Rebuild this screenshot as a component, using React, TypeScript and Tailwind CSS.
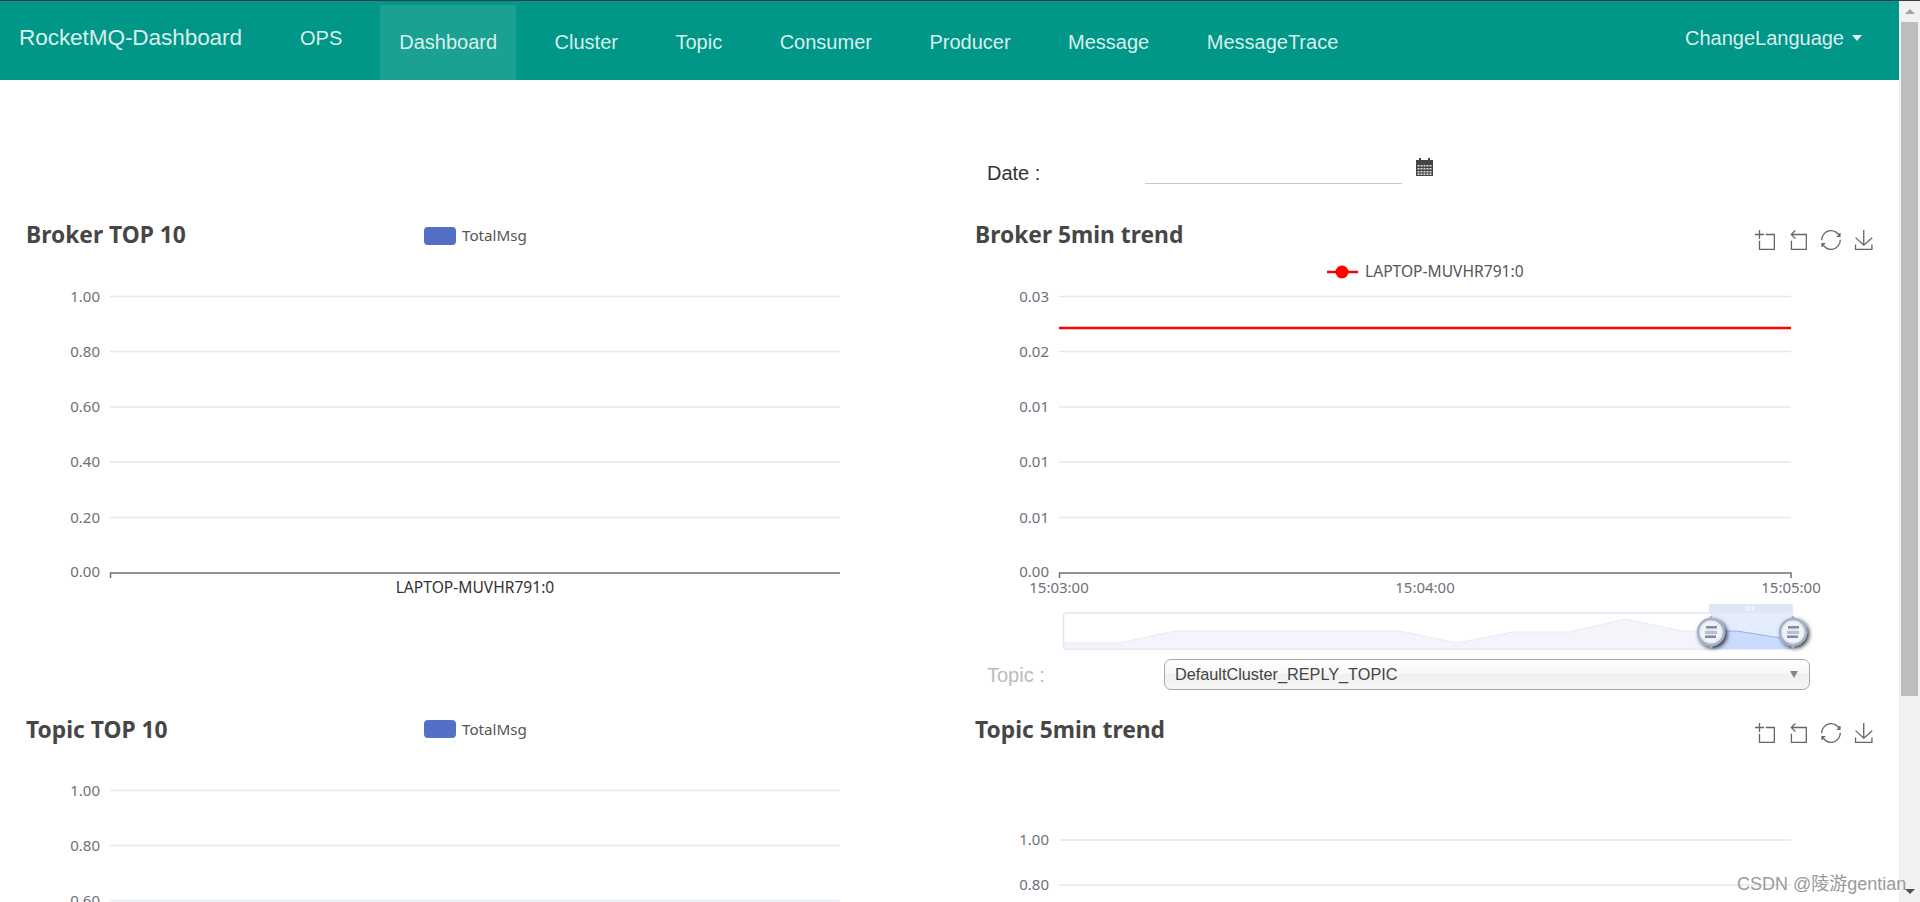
import React from "react";

const NAV_ITEMS = ["Dashboard", "Cluster", "Topic", "Consumer", "Producer", "Message", "MessageTrace"];

const GRID = "#e3e7f4";
const AXIS = "#6e7079";

// svg coordinates are page coordinates minus the top of the chart (257 / 750)
const TOOL_ICONS = [
  "M0,13.5h26.9 M13.5,26.9V0 M32.1,13.5H58V58H13.5V32.1",
  "M22,1.4L9.9,13.5l12.3,12.3 M10.3,13.5H54.9v44.6H10.3v-26",
  "M47,18.9h9.8V8.7 M56.3,20.1C52.1,9,40.5,0.6,26.8,2.1C12.6,3.7,1.6,16.2,2.1,30.6 M13,41.1H3.1v10.2 M3.7,39.9c4.2,11.1,15.8,19.5,29.5,18c14.2-1.6,25.2-14.1,24.7-28.5",
  "M4.7,22.9L29.3,45.5L54.7,23.4 M4.6,43.6L4.6,58L53.8,58L53.8,43.6 M29.2,45.1L29.2,0",
];

const Toolbox = () => (
  <div className="ml-auto mt-2 mr-[25px] flex gap-[13px]">
    {TOOL_ICONS.map((d) => (
      <svg key={d} viewBox="0 0 60 60" className="h-5 w-5 overflow-visible" fill="none" stroke="#666">
        <path d={d} strokeWidth={1.3} vectorEffect="non-scaling-stroke" />
      </svg>
    ))}
  </div>
);

const Heading = ({ children, lower }: { children: React.ReactNode; lower?: boolean }) => (
  <h2
    className={`${lower ? "mt-[2px]" : "-mt-[1px]"} font-['Noto_Sans',sans-serif] text-[22.8px] font-bold leading-none text-[#464646] whitespace-nowrap`}
  >
    {children}
  </h2>
);

const BarHeader = ({ title, lower }: { title: string; lower?: boolean }) => (
  <div className="flex h-[42px] items-center pl-[26px]">
    <div className="w-[398px]">
      <Heading lower={lower}>{title}</Heading>
    </div>
    <span className="h-[18px] w-[32px] rounded-[4px] bg-[#5470c6]" />
    <span className={`ml-[6px] ${lower ? "mt-0" : "-mt-[2px]"} font-['Noto_Sans',sans-serif] text-[15.2px] text-[#555]`}>TotalMsg</span>
  </div>
);

const GridLines = ({ ticks, x1, x2 }: { ticks: { y: number; label: string }[]; x1: number; x2: number }) => (
  <>
    {ticks.map((t) => (
      <g key={t.y}>
        <line x1={x1} x2={x2} y1={t.y} y2={t.y} stroke={GRID} strokeWidth={1.5} />
        <text x={x1 - 10} y={t.y + 5} textAnchor="end" className="fill-[#6e7079] text-[15px]">
          {t.label}
        </text>
      </g>
    ))}
  </>
);

const Handle = ({ x }: { x: number }) => (
  <g transform={`translate(${x} 375)`}>
    <circle r={13} fill="url(#handleFill)" stroke="#a4afc8" strokeWidth={2.5} filter="url(#handleShadow)" />
    <circle cy={-14.5} r={1.5} fill="#a4afc8" />
    <circle cy={14.5} r={1.5} fill="#a4afc8" />
    <rect x={-5} y={-6} width={11} height={2.5} fill="#7f8ba8" />
    <rect x={-6} y={-1} width={12} height={3} fill="#b9bfce" />
    <rect x={-6} y={3.5} width={11} height={2.5} fill="#7f8ba8" />
  </g>
);

const BarChart = ({ ticks, height, withAxis }: { ticks: { y: number; label: string }[]; height: number; withAxis?: boolean }) => (
  <svg width={950} height={height} className="block font-['Noto_Sans',sans-serif]">
    <GridLines ticks={ticks} x1={110} x2={840} />
    {withAxis && (
      <>
        <text x={100} y={320} textAnchor="end" className="fill-[#6e7079] text-[15px]">
          0.00
        </text>
        <path d="M110.5 321V316H840" fill="none" stroke={AXIS} strokeWidth={1.5} />
        <text x={475} y={336} textAnchor="middle" className="fill-[#333] text-[15.6px]">
          LAPTOP-MUVHR791:0
        </text>
      </>
    )}
  </svg>
);

const TrendChart = () => (
  <svg width={949} height={398} className="block font-['Noto_Sans',sans-serif]">
    <defs>
      <radialGradient id="handleFill" cx="50%" cy="50%" r="55%">
        <stop offset="0%" stopColor="#dfe2e8" />
        <stop offset="60%" stopColor="#f4f5f8" />
        <stop offset="100%" stopColor="#d3d8e3" />
      </radialGradient>
      <filter id="handleShadow" x="-60%" y="-60%" width="220%" height="220%">
        <feDropShadow dx={2} dy={2} stdDeviation={2} floodColor="#000" floodOpacity={0.8} />
      </filter>
    </defs>

    {/* legend */}
    <line x1={377} x2={408} y1={15} y2={15} stroke="#ff0000" strokeWidth={2.5} />
    <circle cx={392} cy={15} r={6.5} fill="#ff0000" />
    <text x={415} y={20} className="fill-[#555] text-[15.6px]">
      LAPTOP-MUVHR791:0
    </text>

    <GridLines
      x1={109}
      x2={841}
      ticks={[
        { y: 39.5, label: "0.03" },
        { y: 94.5, label: "0.02" },
        { y: 150, label: "0.01" },
        { y: 205, label: "0.01" },
        { y: 260.5, label: "0.01" },
      ]}
    />
    <text x={99} y={320} textAnchor="end" className="fill-[#6e7079] text-[15px]">
      0.00
    </text>
    <line x1={109} x2={841} y1={71} y2={71} stroke="#ff0000" strokeWidth={2.5} />
    <path d="M109.5 321V316H841V321" fill="none" stroke={AXIS} strokeWidth={1.5} />
    {["15:03:00", "15:04:00", "15:05:00"].map((label, i) => (
      <text key={label} x={109 + i * 366} y={336} textAnchor="middle" className="fill-[#6e7079] text-[15px]">
        {label}
      </text>
    ))}

    {/* data zoom */}
    <rect x={113.5} y={356} width={727} height={36} rx={3} fill="#fff" stroke="#dfe6f6" strokeWidth={1.5} />
    <path
      d="M114 386H169L225 374H450L507 386L563 375H619L675 362L732 374H761V392H114Z"
      fill="#f3f5fb"
      stroke="#e6ebf7"
      strokeWidth={1}
    />
    <rect x={761} y={356} width={82} height={36} fill="#e5edfd" />
    <path d="M761 374H787L843 383V392H761Z" fill="#cadcfd" />
    <path d="M761 374H787L843 383" fill="none" stroke="#8fb0f7" strokeWidth={1} />
    <rect x={759} y={347} width={84} height={9} rx={1} fill="#dfe7f5" />
    <path d="M797 349.5v4M800 349.5v4M803 349.5v4" stroke="#fff" strokeWidth={1.2} />
    <Handle x={761} />
    <Handle x={843} />
  </svg>
);

const App = () => {
  return (
    <div className="flex h-[902px] w-full flex-col overflow-hidden bg-white">
      <div className="h-px bg-[#2f3e46]" />
      <div className="flex min-h-0 flex-1">
        <div className="w-[1899px] shrink-0">
          <nav className="flex h-[79px] bg-[#009688] font-['Liberation_Sans',Arial,sans-serif] text-[#d8efeb]">
            <a className="w-[283px] pl-[19px] pt-[24px] text-[22.6px] leading-[26px] tracking-[-0.1px]">RocketMQ-Dashboard</a>
            <a className="px-[17px] pt-[25px] text-[20px] leading-[24px]">OPS</a>
            <ul className="ml-[21px] flex gap-[19.5px] pt-[4px]">
              {NAV_ITEMS.map((item) => (
                <li
                  key={item}
                  className={`px-[19px] pt-[25px] text-[20px] leading-[24px] ${item === "Dashboard" ? "bg-[#1ba192]" : ""}`}
                >
                  {item}
                </li>
              ))}
            </ul>
            <div className="ml-auto mr-[37px] flex items-center gap-[8px] self-start pt-[25px] text-[20px] leading-[24px]">
              ChangeLanguage
              <span className="h-0 w-0 border-x-[5.5px] border-t-[6px] border-x-transparent border-t-[#d8efeb]" />
            </div>
          </nav>

          <div className="grid grid-cols-[950px_949px]">
            <div className="h-[135px]" />
            <div className="flex h-[135px] items-start font-['Liberation_Sans',Arial,sans-serif]">
              <span className="ml-[37px] mt-[81px] w-[158px] text-[20px] leading-[24px] text-[#333]">Date :</span>
              <span className="mt-[103px] h-px w-[257px] bg-[#c9c9c9]" />
              <svg viewBox="0 0 17 18" className="ml-[14px] mt-[78px] h-[18px] w-[17px]">
                <path d="M3 0h2v2h7V0h2v2h3v16H0V2h3z" fill="#444" />
                {[7, 10, 13, 15.5].map((y) =>
                  [1.5, 4.5, 7.5, 10.5, 13.5].map((x) => (
                    <rect key={`${x}-${y}`} x={x} y={y} width={2} height={1.5} fill="#ddd" />
                  ))
                )}
              </svg>
            </div>

            {/* broker row */}
            <div className="h-[493px]">
              <BarHeader title="Broker TOP 10" />
              <BarChart
                withAxis
                height={451}
                ticks={[
                  { y: 39.5, label: "1.00" },
                  { y: 94.5, label: "0.80" },
                  { y: 150, label: "0.60" },
                  { y: 205, label: "0.40" },
                  { y: 260.5, label: "0.20" },
                ]}
              />
            </div>
            <div className="h-[493px]">
              <div className="flex h-[42px] items-center pl-[25px]">
                <Heading>Broker 5min trend</Heading>
                <Toolbox />
              </div>
              <TrendChart />
              <div className="mt-[4px] flex items-center font-['Liberation_Sans',Arial,sans-serif]">
                <span className="ml-[37px] w-[177px] text-[20px] leading-[24px] text-[#bbbbbb]">Topic :</span>
                <div className="flex h-[31px] w-[646px] items-center justify-between rounded-[7px] border border-[#a9a9a9] bg-[linear-gradient(#fff,#f7f7f7_50%,#f0f0f0_50%,#f5f5f5)] pl-[10px] pr-[11px] text-[16.25px] text-[#444]">
                  DefaultCluster_REPLY_TOPIC
                  <span className="h-0 w-0 border-x-[4.5px] border-t-[7px] border-x-transparent border-t-[#888]" />
                </div>
              </div>
            </div>

            {/* topic row */}
            <div>
              <BarHeader title="Topic TOP 10" lower />
              <BarChart
                height={152}
                ticks={[
                  { y: 40.5, label: "1.00" },
                  { y: 95.5, label: "0.80" },
                  { y: 150.5, label: "0.60" },
                ]}
              />
            </div>
            <div>
              <div className="flex h-[42px] items-center pl-[25px]">
                <Heading lower>Topic 5min trend</Heading>
                <Toolbox />
              </div>
              <svg width={949} height={152} className="block font-['Noto_Sans',sans-serif]">
                <GridLines
                  x1={109}
                  x2={841}
                  ticks={[
                    { y: 90, label: "1.00" },
                    { y: 135, label: "0.80" },
                  ]}
                />
              </svg>
            </div>
          </div>
        </div>

        {/* scrollbar */}
        <div className="flex w-[21px] flex-col items-center bg-[#f1f1f1]">
          <span className="mt-[8px] h-0 w-0 border-x-[5px] border-b-[5px] border-x-transparent border-b-[#a3a3a3]" />
          <span className="mt-[8px] h-[674px] w-[17px] bg-[#bdbdbd]" />
          <span className="mt-auto mb-[8px] h-0 w-0 border-x-[5px] border-t-[5px] border-x-transparent border-t-[#505050]" />
        </div>
      </div>

      <span className="absolute left-[1737px] top-[873px] font-['Liberation_Sans','Noto_Sans_CJK_SC',sans-serif] text-[18px] leading-[22px] text-[#9a9a9a]">
        CSDN @陵游gentian
      </span>
    </div>
  );
};

export default App;
